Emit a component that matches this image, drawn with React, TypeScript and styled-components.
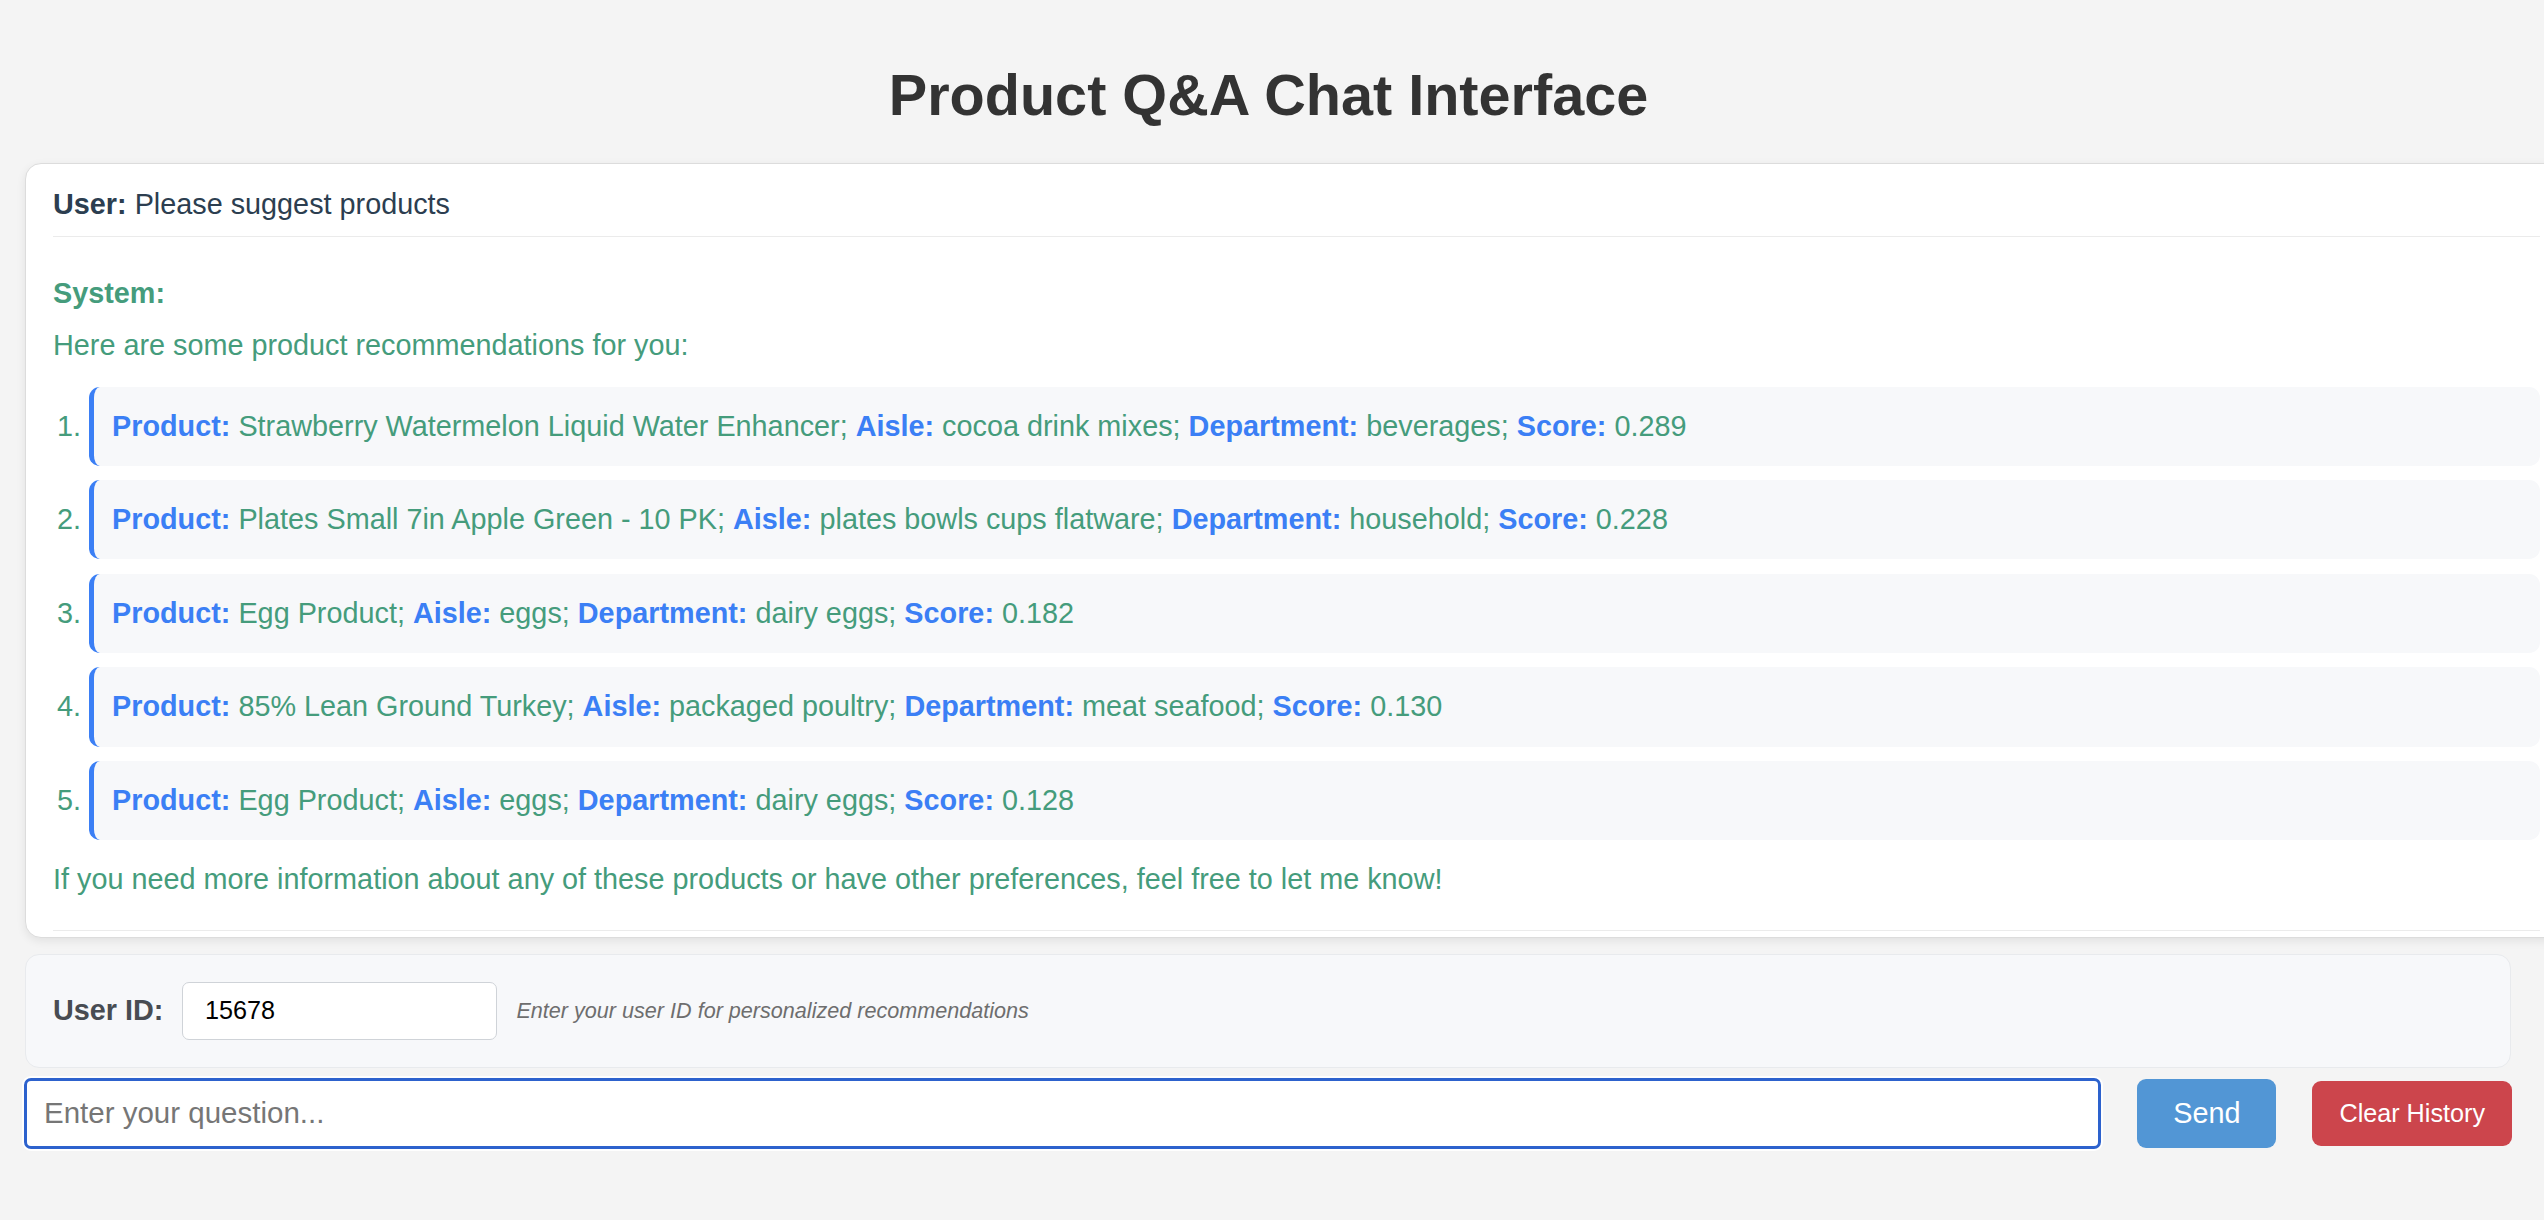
import React from "react";
import styled, { createGlobalStyle } from "styled-components";

const GlobalStyle = createGlobalStyle`
  html, body {
    margin: 0;
    padding: 0;
    overflow-x: hidden;
    background: #f4f4f4;
  }
  body {
    font-family: "Liberation Sans", Arial, Helvetica, sans-serif;
  }
  * { box-sizing: border-box; }
`;

const Page = styled.div`
  padding: 61px 32px 40px 25px;
  min-height: 1220px;
`;

const Title = styled.h1`
  margin: 0 0 33px;
  text-align: center;
  font-size: 57.6px;
  line-height: 1.2;
  font-weight: 700;
  color: #333333;
`;

const ChatCard = styled.div`
  box-sizing: content-box;
  width: 100%;
  background: #ffffff;
  border: 1px solid #dcdcdc;
  border-radius: 16px;
  padding: 22.7px 27px 6px;
  box-shadow: 0 3px 10px rgba(0, 0, 0, 0.08);
`;

const UserMessage = styled.div`
  font-size: 28.8px;
  line-height: 1.2;
  color: #2c3e50;
  padding-bottom: 14.4px;
  border-bottom: 1px solid #ebebeb;
`;

const SystemMessage = styled.div`
  font-size: 28.8px;
  line-height: 1.2;
  color: #459c7c;
  padding: 39.7px 0 33px;
  border-bottom: 1px solid #ebebeb;
`;

const SystemLabel = styled.div`
  font-weight: 700;
  margin-bottom: 17.4px;
`;

const Paragraph = styled.p<{ $after: number }>`
  margin: 0 0 ${(p) => p.$after}px;
`;

const ProductList = styled.ol`
  margin: 0 0 22px;
  padding-left: 36px;
`;

const ProductItem = styled.li`
  background: #f7f8fa;
  border-left: 5.4px solid #3b7ff5;
  border-radius: 10.8px;
  padding: 18px;
  line-height: 1.5;
  & + & {
    margin-top: 14.4px;
  }
`;

const Key = styled.strong`
  color: #3b7ff5;
  font-weight: 700;
`;

const UserIdPanel = styled.div`
  margin-top: 16px;
  height: 114px;
  width: 2486px;
  display: flex;
  align-items: center;
  padding: 0 27px;
  background: #f7f8fa;
  border: 1px solid #e8eaed;
  border-radius: 14px;
`;

const UserIdLabel = styled.label`
  font-size: 28.8px;
  font-weight: 700;
  color: #484c52;
  margin-right: 19px;
`;

const UserIdInput = styled.input`
  width: 315px;
  height: 58px;
  padding: 0 21.6px;
  font-family: "Liberation Sans", Arial, sans-serif;
  font-size: 25.2px;
  color: #000000;
  background: #ffffff;
  border: 1px solid #cfd3d8;
  border-radius: 7px;
  outline: none;
`;

const Hint = styled.span`
  margin-left: 19px;
  font-size: 21.6px;
  font-style: italic;
  color: #6e6e6e;
`;

const QuestionRow = styled.div`
  margin-top: 10px;
  display: flex;
  align-items: center;
  gap: 36px;
  width: 2488px;
  margin-left: -1px;
`;

const QuestionInput = styled.input`
  flex: 1;
  height: 71px;
  padding: 0 17px;
  font-family: "Liberation Sans", Arial, sans-serif;
  font-size: 29.5px;
  color: #222;
  background: #ffffff;
  border: 3.2px solid #2d62cd;
  border-radius: 7px;
  outline: none;
  box-shadow: 0 0 0 2px rgba(255, 255, 255, 0.9);
  &::placeholder {
    color: #767676;
  }
`;

const ActionButton = styled.button<{ $tone: "send" | "clear" }>`
  border: none;
  border-radius: 9px;
  color: #ffffff;
  font-family: "Liberation Sans", Arial, sans-serif;
  cursor: pointer;
  background: ${(p) => (p.$tone === "send" ? "#5296d5" : "#cc454c")};
  height: ${(p) => (p.$tone === "send" ? 69 : 65)}px;
  padding: ${(p) => (p.$tone === "send" ? "0 36px" : "0 27px")};
  font-size: ${(p) => (p.$tone === "send" ? 28.8 : 25.2)}px;
`;

type Product = {
  name: string;
  aisle: string;
  department: string;
  score: string;
};

const products: Product[] = [
  { name: "Strawberry Watermelon Liquid Water Enhancer", aisle: "cocoa drink mixes", department: "beverages", score: "0.289" },
  { name: "Plates Small 7in Apple Green - 10 PK", aisle: "plates bowls cups flatware", department: "household", score: "0.228" },
  { name: "Egg Product", aisle: "eggs", department: "dairy eggs", score: "0.182" },
  { name: "85% Lean Ground Turkey", aisle: "packaged poultry", department: "meat seafood", score: "0.130" },
  { name: "Egg Product", aisle: "eggs", department: "dairy eggs", score: "0.128" },
];

export default function App() {
  return (
    <>
      <GlobalStyle />
      <Page>
        <Title>Product Q&amp;A Chat Interface</Title>
        <ChatCard>
          <UserMessage>
            <strong>User:</strong> Please suggest products
          </UserMessage>
          <SystemMessage>
            <SystemLabel>System:</SystemLabel>
            <Paragraph $after={23.7}>Here are some product recommendations for you:</Paragraph>
            <ProductList>
              {products.map((p, i) => (
                <ProductItem key={i}>
                  <Key>Product:</Key> {p.name}; <Key>Aisle:</Key> {p.aisle};{" "}
                  <Key>Department:</Key> {p.department}; <Key>Score:</Key> {p.score}
                </ProductItem>
              ))}
            </ProductList>
            <Paragraph $after={0}>
              If you need more information about any of these products or have other preferences, feel free to let me know!
            </Paragraph>
          </SystemMessage>
        </ChatCard>
        <UserIdPanel>
          <UserIdLabel htmlFor="uid">User ID:</UserIdLabel>
          <UserIdInput id="uid" defaultValue="15678" />
          <Hint>Enter your user ID for personalized recommendations</Hint>
        </UserIdPanel>
        <QuestionRow>
          <QuestionInput placeholder="Enter your question..." />
          <ActionButton $tone="send">Send</ActionButton>
          <ActionButton $tone="clear">Clear History</ActionButton>
        </QuestionRow>
      </Page>
    </>
  );
}
